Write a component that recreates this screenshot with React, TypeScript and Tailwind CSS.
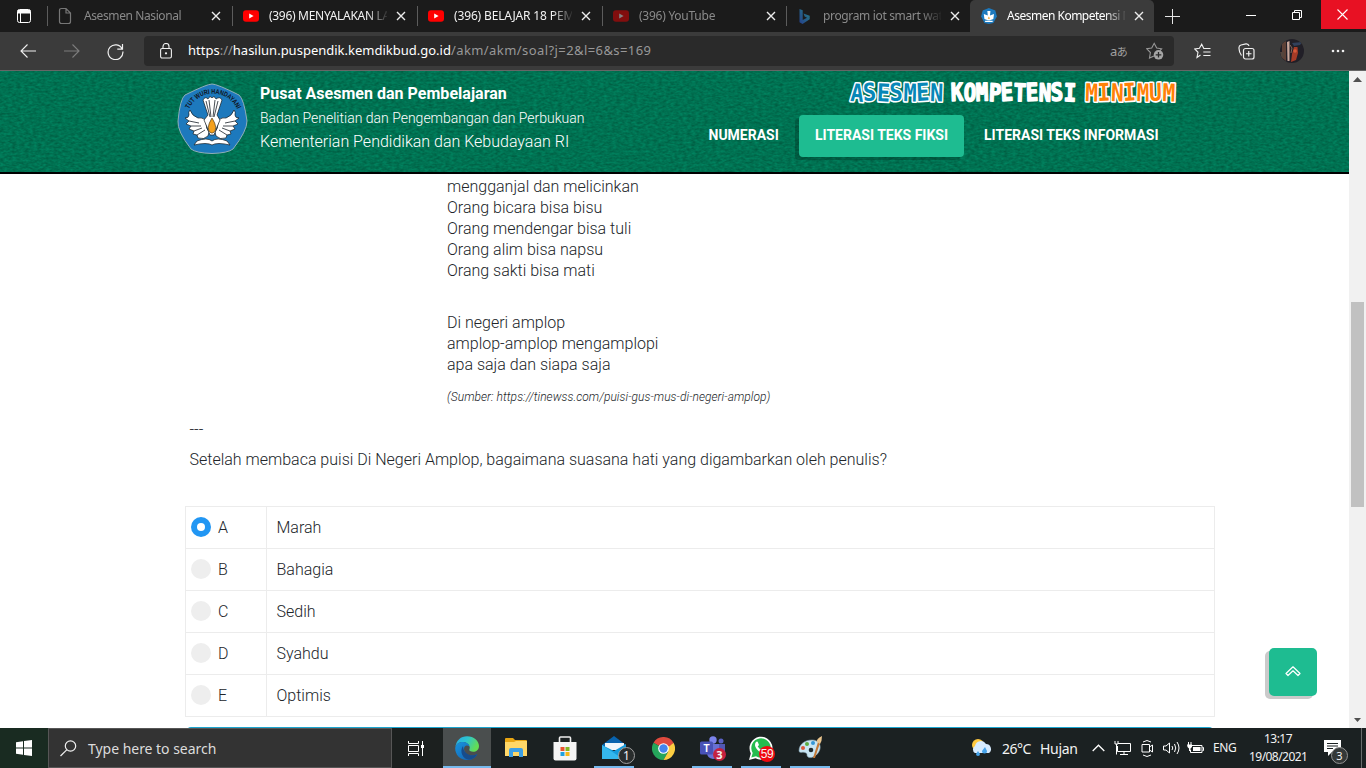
import React from 'react';

type P = { className?: string };

const CloseX = ({ className = '' }: P) => (
  <svg className={className} width="10" height="10" viewBox="0 0 10 10" fill="none" stroke="#ececec" strokeWidth="1.4">
    <path d="M1 1L9 9M9 1L1 9" />
  </svg>
);

const Page = () => (
  <svg width="16" height="18" viewBox="0 0 16 18" fill="none" stroke="#777" strokeWidth="1.2">
    <path d="M1.5 3.5Q1.5 1.5 3.5 1.5H8L12.500 6V14.500Q12.500 16.500 10.500 16.500H3.500Q1.500 16.500 1.500 14.500ZM8 1.500V6H12.500" />
  </svg>
);

const YouTube = ({ className = '' }: P) => (
  <svg className={className} width="16" height="16" viewBox="0 0 16 16">
    <rect x="0" y="2.300" width="16" height="11.400" rx="3" fill="#ff0000" />
    <path d="M6.200 5.500L10.600 8L6.200 10.500Z" fill="#fff" />
  </svg>
);

const Bing = () => (
  <svg width="16" height="17" viewBox="0 0 16 17">
    <defs>
      <linearGradient id="bing" x1="0" y1="1" x2="1" y2="0">
        <stop offset="0" stopColor="#25408c" />
        <stop offset="1" stopColor="#267f83" />
      </linearGradient>
    </defs>
    <path d="M2.500 1L5.700 2.300V12L10 9.700L7.600 8.400L6.500 5.500L12.700 7.800V11.200L5.500 16L2.500 14.200Z" fill="url(#bing)" />
  </svg>
);

const SealShapes = () => (
  <>
    <path d="M35 1Q40 1 62 12Q67 16 70 38Q70 48 56 66Q51 70 35 70.500Q19 70 14 66Q0 48 1 38Q3 16 8 12Q30 1 35 1Z" fill="#1d79bd" stroke="#90aeb8" strokeWidth="1" />
    <g fill="#fff" stroke="#151b20" strokeWidth=".7">
      <path d="M31 53Q27 57 21 55L20 52L16 51L17 48L12 46L14 43L9 41L12 38L8 35Q12 35 12 32Q11 29 13 27Q15 33 21 35Q28 34 29 40Q29 46 32 49Z" />
      <path d="M39 53Q43 57 49 55L50 52L54 51L53 48L58 46L56 43L61 41L58 38L62 35Q58 35 58 32Q59 29 57 27Q55 33 49 35Q42 34 41 40Q41 46 38 49Z" />
      <path d="M26 17Q28 13 31 16Q33 12 35 15Q37 12 39 16Q43 13 45 17L40 32L43 37L40 44L37 52H33L30 44L27 37L31 32Z" />
      <path d="M20 58Q30 54 35 58Q40 54 50 58L53 62Q40 59 35 62Q30 59 17 62Z" />
    </g>
    <path d="M29 18L33 34M32 17L34 34M38 17L36 34M41 18L37 34M17 48L25 45M20 52L28 47M53 48L45 45M50 52L42 47M12 38L22 40M58 38L48 40M14 43L24 43M56 43L46 43" fill="none" stroke="#182027" strokeWidth=".8" />
    <path d="M35 35Q42 46 36 50H34Q28 46 35 35Z" fill="#f4a01c" stroke="#352b18" strokeWidth=".6" />
  </>
);

const Seal = () => (
  <svg width="71" height="72" viewBox="0 0 71 72">
    <SealShapes />
    <defs>
      <path id="arc" d="M12 26A26.500 26.500 0 0 1 60 26" />
    </defs>
    <text fontFamily="Liberation Sans" fontWeight="700" fontSize="7" fill="#10151c">
      <textPath href="#arc" textLength="60" lengthAdjust="spacingAndGlyphs" startOffset="0">TUT WURI HANDAYANI</textPath>
    </text>
  </svg>
);

const MiniSeal = () => (
  <svg width="16" height="16" viewBox="0 0 71 72">
    <path d="M35 0L64 11L71 38L55 68L35 72L15 68L0 38L7 11Z" fill="#1d79bd" />
    <path d="M28 14H42L40 34L58 27L55 49L40 55H30L15 49L12 27L30 34Z M18 57H52V63H18Z" fill="#fff" />
    <path d="M35 38L40 48H30Z" fill="#f4a01c" />
  </svg>
);

type TabProps = {
  title: string;
  icon: React.ReactNode;
  width: string;
  tone: string;
  track: string;
  active?: boolean;
};

const Tab = ({ title, icon, width, tone, track, active }: TabProps) => (
  <div className={`${width} flex h-8 shrink-0 items-center ${active ? 'rounded-t-[5px] bg-[#3b3b3b]' : ''}`}>
    <span className={`h-5 w-px ${active ? '' : 'bg-[#5c5c5c]'}`} />
    <span className="flex w-9 shrink-0 justify-start pl-[10px]">{icon}</span>
    <span className={`w-[118px] shrink-0 overflow-hidden whitespace-nowrap text-[12px] leading-8 [mask-image:linear-gradient(to_right,#000_98px,transparent_120px)] ${tone} ${track}`}>
      {title}
    </span>
    <span className="ml-[9px]"><CloseX /></span>
  </div>
);

const TabStrip = () => (
  <div className="flex h-8 bg-[#1b1b1b]">
    <div className="flex w-[47px] shrink-0 items-center pl-[17px]">
      <svg width="14" height="14" viewBox="0 0 14 14" fill="none" stroke="#fff" strokeWidth="1">
        <rect x=".5" y=".5" width="13" height="13" rx="2" />
        <path d="M1 1.500H13V4H1ZM3.500 4V13" fill="#fff" />
      </svg>
    </div>
    <Tab width="w-[185px]" title="Asesmen Nasional" icon={<Page />} tone="text-[#8a8a8a]" track="tracking-[-0.4px]" />
    <Tab width="w-[185px]" title="(396) MENYALAKAN LAMPU" icon={<YouTube />} tone="text-[#f2f2f2]" track="tracking-[-0.3px]" />
    <Tab width="w-[185px]" title="(396) BELAJAR 18 PEMROGRAMAN" icon={<YouTube />} tone="text-[#f2f2f2]" track="tracking-[-0.15px]" />
    <Tab width="w-[184px]" title="(396) YouTube" icon={<YouTube className="opacity-45" />} tone="text-[#8a8a8a]" track="tracking-[-0.25px]" />
    <Tab width="w-[184px]" title="program iot smart water" icon={<Bing />} tone="text-[#8a8a8a]" track="tracking-[-0.35px]" />
    <Tab width="w-[184px]" title="Asesmen Kompetensi Minimum" icon={<MiniSeal />} tone="text-white" track="tracking-[-0.5px]" active />
    <div className="flex w-9 shrink-0 items-center justify-center">
      <svg width="15" height="15" viewBox="0 0 15 15" stroke="#e5e5e5"><path d="M7.500 0V15M0 7.500H15" /></svg>
    </div>
    <div className="ml-auto flex h-[29px] shrink-0">
      <span className="flex w-[46px] items-center justify-center pr-[2px]"><svg width="10" height="10" stroke="#fff"><path d="M0 5.500H10" /></svg></span>
      <span className="flex w-[46px] items-center justify-center pr-[2px]">
        <svg width="10" height="10" fill="none" stroke="#fff"><path d="M.5 2.500H7.500V9.500H.5ZM2.500 2.500V.5H9.500V7.500H7.500" /></svg>
      </span>
      <span className="flex w-[45px] items-center justify-center bg-[#e81123] pr-[2px]">
        <svg width="11" height="11" stroke="#fff" strokeWidth="1.1"><path d="M.5 .5L10.500 10.500M10.500 .5L.5 10.500" /></svg>
      </span>
    </div>
  </div>
);

const Toolbar = () => (
  <div className="flex h-[39px] items-start border-b border-[#666] bg-[#3b3b3b]">
    <div className="flex h-[38px] w-36 shrink-0 items-center pl-5">
      <svg width="16" height="14" fill="none" stroke="#f0f0f0" strokeWidth="1.1"><path d="M7.500 .5L1 7L7.500 13.500M1 7H16" /></svg>
      <svg className="ml-7" width="16" height="14" fill="none" stroke="#7d7d7d" strokeWidth="1.100"><path d="M8.500 .5L15 7L8.500 13.500M15 7H0" /></svg>
      <svg className="ml-[27px]" width="17" height="17" viewBox="0 0 17 17" fill="none" stroke="#f0f0f0" strokeWidth="1.200">
        <path d="M15.300 6.200A7.400 7.400 0 1 0 15.900 8.500M15.500 1V6.200H10.300" />
      </svg>
    </div>
    <div className="mt-1 flex h-[30px] w-[1030px] shrink-0 items-center rounded-[4px] bg-[#2a2a2a] pl-4">
      <svg width="12" height="16" viewBox="0 0 12 16" fill="none" stroke="#f0f0f0" strokeWidth="1.100">
        <rect x=".6" y="5.500" width="10.800" height="9.500" rx="1.500" />
        <path d="M3 5.500V3.500A3 3 0 0 1 9 3.500V5.500" /><circle cx="6" cy="10.300" r=".6" fill="#fff" />
      </svg>
      <span className="ml-4 whitespace-nowrap text-[13px] text-[#989898]">
        <span className="text-white">https</span>://<span className="text-white">hasilun.puspendik.kemdikbud.go.id</span><span className="tracking-[0.42px]">/akm/akm/soal?j=2&amp;l=6&amp;s=169</span>
      </span>
      <span className="ml-auto w-[18px] whitespace-nowrap font-['Noto_Sans',_'Noto_Sans_CJK_JP',sans-serif] text-[13px] leading-none tracking-[-0.5px] text-[#a0a0a0]">a<span className="text-[11px]">あ</span></span>
      <svg className="ml-[18px] mr-[10px]" width="18" height="18" viewBox="0 0 18 18" fill="none" stroke="#989898" strokeWidth="1.100">
        <path d="M8 14L3.500 16L4.400 10.500L.8 6.800L5.700 6L8.200 1.300L10.700 6L15.600 6.800L14 8.500" />
        <circle cx="12.500" cy="12.800" r="4.800" fill="#a5a5a5" stroke="none" /><path d="M12.500 10V15.600M9.700 12.800H15.300" stroke="#2a2a2a" strokeWidth="1.300" />
      </svg>
    </div>
    <div className="flex h-[38px] grow items-center pl-5">
      <svg width="17" height="16" viewBox="0 0 17 16" fill="none" stroke="#f0f0f0" strokeWidth="1.100">
        <path d="M6.500 12L3 14.500L4 9.300L.8 6L5.400 5.300L7.700 1.200L9.800 5.500H16.500M9.300 9H16.500M9.300 12.500H16.500" />
      </svg>
      <svg className="ml-[27px]" width="17" height="17" viewBox="0 0 17 17" fill="none" stroke="#f0f0f0" strokeWidth="1.200">
        <rect x="5.500" y="5.500" width="10.500" height="10.500" rx="2" /><path d="M10.750 8V13.500M8 10.750H13.500M3.500 12.500Q.7 8.500 1 4.500Q1 2.500 3 2L8 .8Q10.500 .6 11 3" />
      </svg>
      <svg className="ml-[25px]" width="24" height="24" viewBox="0 0 24 24">
        <defs><clipPath id="avatar"><circle cx="12" cy="12" r="12" /></clipPath></defs>
        <g clipPath="url(#avatar)">
          <rect width="24" height="24" fill="#211f27" /><path d="M2 4L6 2V22L2 19Z" fill="#5d4036" /><path d="M7 3L9.500 2V22H7.500Z" fill="#c9a79b" />
          <path d="M14 8L17.500 8L18 14L16 21L11 23L12 15Z" fill="#a63b27" /><path d="M12 4L22 3L20 6L14 7Z" fill="#31405c" /><path d="M0 13H4V18H1Z" fill="#54453d" />
          <circle cx="15" cy="12" r="1.800" fill="#d65a3a" /><path d="M10 6L12 9L11 14" stroke="#8a6659" fill="none" />
        </g>
      </svg>
      <svg className="ml-[27px]" width="14" height="4" fill="#f0f0f0"><circle cx="2" cy="2" r="1.300" /><circle cx="7" cy="2" r="1.300" /><circle cx="12" cy="2" r="1.300" /></svg>
    </div>
  </div>
);

const Texture = () => (
  <svg className="absolute inset-0" width="1349" height="101">
    <defs>
      <filter id="felt" x="0" y="0" width="100%" height="100%" colorInterpolationFilters="sRGB">
        <feTurbulence type="fractalNoise" baseFrequency=".24 .45" numOctaves="2" seed="8" />
        <feColorMatrix type="matrix" values="0 0 0 0 0  .22 0 0 0 .335  .17 0 0 0 .235  0 0 0 0 1" />
      </filter>
    </defs>
    <rect width="1349" height="101" fill="#00724f" />
    <rect width="1349" height="101" filter="url(#felt)" />
  </svg>
);

const Wordmark = () => (
  <svg className="block" width="330" height="24" viewBox="847 80 330 24" fontFamily="DejaVu Sans Mono" fontWeight="700" fontSize="24.500" strokeLinejoin="round">
    <g stroke="#fff" strokeWidth="3.200" style={{ paintOrder: 'stroke' }}>
      <text x="850" y="101" textLength="93" lengthAdjust="spacingAndGlyphs" fill="#0787b7" rotate="4 -3 3 -3 2 -3 2">ASESMEN</text>
      <text x="951" y="101" textLength="125" lengthAdjust="spacingAndGlyphs" fill="#fff" strokeWidth="1.500" rotate="-2 2 -2 3 -3 2 -2 2 -3 2">KOMPETENSI</text>
      <text x="1085" y="101" textLength="90" lengthAdjust="spacingAndGlyphs" fill="#ff8108" rotate="2 -2 2 -3 2 -2 2">MINIMUM</text>
    </g>
  </svg>
);

const SiteHeader = () => (
  <header className="relative h-[103px] overflow-hidden border-b-2 border-black bg-[#00724f] text-white">
    <Texture />
    <div className="relative flex h-[101px]">
      <div className="ml-[177px] mt-3 w-[83px] shrink-0"><Seal /></div>
      <div className="w-[433px] shrink-0 whitespace-nowrap pt-[11px]">
        <div className="text-[16px] font-bold leading-6 tracking-[0.02px]">Pusat Asesmen dan Pembelajaran</div>
        <div className="text-[14px] font-light leading-6">Badan Penelitian dan Pengembangan dan Perbukuan</div>
        <div className="text-[16px] font-light leading-6">Kementerian Pendidikan dan Kebudayaan RI</div>
      </div>
      <div className="w-[490px] shrink-0">
        <div className="ml-[154px] mt-[9px]"><Wordmark /></div>
        <nav className="mt-[11px] flex h-[42px] items-center whitespace-nowrap text-[14px] font-bold leading-10">
          <span className="h-[42px] w-[106px] pl-[15.5px]">NUMERASI</span>
          <span className="h-[42px] w-[165px] rounded-[4px] bg-[#1ebc91] text-center shadow-[-4px_3px_0_rgba(0,0,0,0.2)]">LITERASI TEKS FIKSI</span>
          <span className="h-[42px] pl-5">LITERASI TEKS INFORMASI</span>
        </nav>
      </div>
    </div>
  </header>
);

const stanza1 = ['mengganjal dan melicinkan', 'Orang bicara bisa bisu', 'Orang mendengar bisa tuli', 'Orang alim bisa napsu', 'Orang sakti bisa mati'];
const stanza2 = ['Di negeri amplop', 'amplop-amplop mengamplopi', 'apa saja dan siapa saja'];
const choices = [['A', 'Marah'], ['B', 'Bahagia'], ['C', 'Sedih'], ['D', 'Syahdu'], ['E', 'Optimis']];

const Question = () => (
  <main className="h-[554px] overflow-hidden pl-[185px] pt-[2px] text-[16px] font-light leading-[21px] text-[#212529]">
    <div className="pl-[262px]">
      {stanza1.map((l) => <p key={l}>{l}</p>)}
      <div className="h-[31px]" />
      {stanza2.map((l) => <p key={l}>{l}</p>)}
      <p className="mt-3 text-[12px] italic tracking-[0.05px]">(Sumber: https://tinewss.com/puisi-gus-mus-di-negeri-amplop)</p>
    </div>
    <p className="mt-[11px] pl-[4.5px]">---</p>
    <p className="mt-[9px] pl-[4.5px]">Setelah membaca puisi Di Negeri Amplop, bagaimana suasana hati yang digambarkan oleh penulis?</p>
    <div className="mt-9 w-[1030px] border border-b-0 border-[#ececec]">
      {choices.map(([k, t], i) => (
        <div key={k} className="flex h-[42px] items-center border-b border-[#ececec]">
          <div className="flex h-full w-[81px] items-center border-r border-[#ececec] pl-[5px]">
            {i === 0 ? (
              <span className="mb-px flex size-5 items-center justify-center rounded-full bg-[#2196f3]"><span className="size-2 rounded-full bg-white" /></span>
            ) : (
              <span className="mb-px size-5 rounded-full bg-[#eee]" />
            )}
            <span className="ml-[7px]">{k}</span>
          </div>
          <span className="pl-[9.5px]">{t}</span>
        </div>
      ))}
    </div>
    <div className="ml-[2px] mt-[10px] h-8 w-[1026px] rounded-[4px] bg-[#1ba5cf]" />
  </main>
);

const Scrollbar = () => (
  <div className="flex w-[17px] shrink-0 flex-col items-center bg-[#f1f1f1]">
    <svg className="mt-[6px]" width="9" height="5" fill="#505050"><path d="M4.500 0L9 5H0Z" /></svg>
    <div className="mt-[220px] h-[205px] w-[13px] bg-[#c1c1c1]" />
    <svg className="mb-[6px] mt-auto" width="7" height="4" fill="#505050"><path d="M0 0H7L3.500 4Z" /></svg>
  </div>
);

const Edge = () => (
  <svg width="24" height="24" viewBox="0 0 24 24">
    <defs>
      <linearGradient id="eg" x1="0" y1="0" x2="1" y2=".4"><stop offset="0" stopColor="#28a9e8" /><stop offset=".5" stopColor="#2dc5cf" /><stop offset="1" stopColor="#63dd54" /></linearGradient>
      <linearGradient id="eb" x1="0" y1="0" x2="1" y2="1"><stop offset="0" stopColor="#1794df" /><stop offset="1" stopColor="#155ca9" /></linearGradient>
    </defs>
    <path d="M.3 12C1 4 6 .2 12 .2C19 .2 24 5 24 10C24 15 19 17 15 15C13.500 14 15 13 14.700 11C14 8 11 6 8 6C4 6 1 8 .3 12Z" fill="url(#eg)" />
    <path d="M.2 12C1 8 4 6 8 6C11 6 14 7.500 14.700 10.500C12 8.500 9 9.500 9 13C9 17 13 20 18 19.500C20 19.300 22 17.500 22.300 18C20.500 22 16.500 24 12 24C5 24 0 18.500 .2 12Z" fill="url(#eb)" />
    <path d="M8 10C4 16 8 23 14 23.800C18 23.500 21 21 22.300 18C17 21 8.500 19 8 10Z" fill="#174c8b" />
  </svg>
);

const Folder = () => (
  <svg width="22" height="20" viewBox="0 0 22 20">
    <path d="M0 1Q0 0 1 0H8L10 2H21Q22 2 22 3V18H0Z" fill="#e8a512" /><path d="M0 4H9L11 3H22V18H0Z" fill="#ffd767" />
    <path d="M4 18V12Q4 10 6 10H16Q18 10 18 12V19H14V14H8V19H4Z" fill="#3c9fe5" />
  </svg>
);

const Store = () => (
  <svg width="24" height="25" viewBox="0 0 24 25">
    <path d="M6.500 7V2Q6.500 1 7.500 1H16.500Q17.500 1 17.500 2V7" fill="none" stroke="#eee" strokeWidth="1.600" /><path d="M.5 6H23.500V22.500Q23.500 24.500 21.500 24.500H2.500Q.5 24.500 .5 22.500Z" fill="#f4f4f4" />
    <path d="M7.500 11H11.500V15H7.500Z" fill="#e9532d" /><path d="M12.500 11H16.500V15H12.500Z" fill="#82b622" /><path d="M7.500 16H11.500V20H7.500Z" fill="#20a1df" /><path d="M12.500 16H16.500V20H12.500Z" fill="#f7b718" />
  </svg>
);

const Mail = () => (
  <svg width="24" height="24" viewBox="0 0 24 24">
    <path d="M0 9L12 0L24 9V12H0Z" fill="#0863ae" /><path d="M3 7H22V14H3Z" fill="#eff6fb" /><path d="M0 9L12 15L24 8V23H0Z" fill="#159bdc" /><path d="M0 9L21 23H0Z" fill="#35b7ed" />
  </svg>
);

const Chrome = () => (
  <svg width="23" height="23" viewBox="0 0 24 24">
    <path d="M12 12L1.600 6A12 12 0 0 1 22.400 6Z" fill="#e04a3e" /><path d="M12 12L1.600 6A12 12 0 0 0 12 24L17 15Z" fill="#25a65b" /><path d="M12 12L22.400 6A12 12 0 0 1 12 24L17 15Z" fill="#fdce42" />
    <path d="M12 6H22.400L18 10Z" fill="#e04a3e" /><circle cx="12" cy="12" r="5.600" fill="#fff" /><circle cx="12" cy="12" r="4.400" fill="#4585ed" />
  </svg>
);

const Teams = () => (
  <svg width="25" height="24" viewBox="0 0 25 24">
    <circle cx="13" cy="4" r="3.700" fill="#7b83eb" /><circle cx="21" cy="5" r="2.500" fill="#5b62c5" /><path d="M17 8H25V16Q23 21 17 19Z" fill="#5158b5" /><path d="M7 8H19V16Q18 23 13 23Q7 22 7 17Z" fill="#6870d4" />
    <rect y="5.500" width="13" height="13" rx="1.500" fill="#4852b7" />
    <text x="6.500" y="15.500" fontFamily="Liberation Sans" fontSize="10" fontWeight="700" fill="#fff" textAnchor="middle">T</text>
  </svg>
);

const WhatsApp = () => (
  <svg width="24" height="24" viewBox="0 0 24 24">
    <path d="M0 24L1.800 17.500A11.500 11.500 0 1 1 6.500 22.300Z" fill="#fff" /><path d="M2.300 21.500L3.700 17A9.700 9.700 0 1 1 7 20.300Z" fill="#25bd4f" />
    <path d="M7 6Q8.500 5 9 6.500L10 9L8.700 10.500Q10.500 13.500 13.500 14.500L15 13L18 14.500Q18 17 15.500 17.500C11 18 6 12 6 9Q6 7 7 6Z" fill="#fff" />
  </svg>
);

const Paint = () => (
  <svg width="25" height="24" viewBox="0 0 25 24">
    <path d="M1 15C1 8 7 4 14 4C20 4 23 8 22 13C20 20 13 23 10 21C8 19 10 18 8 17C5 15 2 18 1 15Z" fill="#c8e5f3" stroke="#819fae" strokeWidth=".6" />
    <circle cx="5" cy="12" r="2" fill="#db583c" /><circle cx="9" cy="8" r="2" fill="#5cac42" /><circle cx="15" cy="7" r="2" fill="#3596d6" /><circle cx="13" cy="14" r="2.300" fill="#1f292d" />
    <path d="M15 22L20 6L22 7L17 22Z" fill="#c47937" /><path d="M19 6Q18 3 24 0Q24 5 22 8Z" fill="#eac58e" />
  </svg>
);

const TaskApp = ({ children, running }: { children: React.ReactNode; running?: boolean }) => (
  <span className="relative flex h-full w-[49px] shrink-0 items-center justify-center pl-px">
    {children}
    {running && <span className="absolute bottom-0 left-[5px] h-[2px] w-10 bg-[#76b9ed]" />}
  </span>
);

const Taskbar = () => (
  <div className="flex h-10 bg-[#1b2122] text-[#f3f3f3]">
    <div className="flex w-12 shrink-0 items-center justify-center bg-[#192b21]">
      <svg width="16" height="16" viewBox="0 0 16 16" fill="#fff"><path d="M0 2.300L7 1.300V7.500H0ZM8 1.100L16 0V7.500H8ZM0 8.500H7V14.700L0 13.700ZM8 8.500H16V16L8 14.900Z" /></svg>
    </div>
    <div className="flex w-[344px] shrink-0 items-center border border-[#565656] bg-[#333] pl-[11px]">
      <svg width="17" height="17" viewBox="0 0 17 17" fill="none" stroke="#f0f0f0" strokeWidth="1.200"><circle cx="10.500" cy="6" r="5.200" /><path d="M6.700 9.800L.5 16" /></svg>
      <span className="ml-[11px] whitespace-nowrap text-[14px] tracking-[-0.030px] text-[#dcdcdc]">Type here to search</span>
    </div>
    <div className="flex w-[51px] shrink-0 items-center justify-center bg-[#1c201f] pr-[3px]">
      <svg width="16" height="15" viewBox="0 0 16 15" fill="none" stroke="#fff"><path d="M.5 0V2.500H10.500V0M.5 4.500H10.500V10.500H.5ZM.5 15V12.500H10.500V15M14.500 0V15" /><path d="M13 4H16V7H13Z" fill="#fff" stroke="none" /></svg>
    </div>
    <span className="relative flex w-12 shrink-0 items-center justify-center bg-[#4a4e4e]"><Edge /><span className="absolute bottom-0 left-0 h-[2px] w-12 bg-[#76b9ed]" /></span>
    <TaskApp><Folder /></TaskApp>
    <TaskApp><Store /></TaskApp>
    <TaskApp running><Mail /><span className="absolute left-[29px] top-[19px] flex size-[17px] items-center justify-center rounded-full border border-[#a0a0a0] bg-[#292d2d] text-[12px] leading-none">1</span></TaskApp>
    <TaskApp><Chrome /></TaskApp>
    <TaskApp running><Teams /><span className="absolute left-[26px] top-[20px] flex size-[13px] items-center justify-center rounded-full bg-[#c4213f] text-[11px] font-bold leading-none">3</span></TaskApp>
    <TaskApp running><WhatsApp /><span className="absolute left-[23px] top-[18px] flex size-4 items-center justify-center rounded-full bg-[#f00910] font-['Liberation_Sans',sans-serif] text-[12px] leading-none tracking-[-0.3px]">59</span></TaskApp>
    <TaskApp running><Paint /></TaskApp>
    <div className="ml-auto flex shrink-0 items-center whitespace-nowrap">
      <svg width="22" height="18" viewBox="0 0 22 18">
        <circle cx="7" cy="6" r="6" fill="#ffc940" /><path d="M4 14A4 4 0 0 1 4 7A6 6 0 0 1 15 5A5 5 0 0 1 18 14Z" fill="#d7ebff" /><path d="M7 12L5 15A2 2 0 1 0 9 15ZM14 8L11 12A2.500 2.500 0 1 0 16 12Z" fill="#45a3ea" />
      </svg>
      <span className="ml-[9px] w-[38px] text-[14px] tracking-[-0.5px]">26°C</span><span className="w-[52px] text-[14px] tracking-[-0.3px]">Hujan</span>
      <svg width="13" height="8" fill="none" stroke="#fff" strokeWidth="1.300"><path d="M.7 7L6.500 1.200L12.300 7" /></svg>
      <svg className="ml-[9px]" width="17" height="15" viewBox="0 0 17 15" fill="none" stroke="#fff"><path d="M4 2.500H16.500V10.500H3.500V5M10 10.500V13.500M6 13.500H14M1 0V3H4V0M2.500 3V13.500" /></svg>
      <svg className="ml-[10px]" width="12" height="17" viewBox="0 0 12 17" fill="none" stroke="#fff"><path d="M2 2Q6 -1 10 2M2 15Q6 18 10 15M1 4.500H8.500V12H1Z" /><path d="M8.500 7L11.500 5V12L8.500 10" /></svg>
      <svg className="ml-[10px]" width="17" height="14" viewBox="0 0 17 14" fill="none" stroke="#fff"><path d="M.5 5H3L6.500 2V12L3 9H.5ZM9 5Q10.500 7 9 9M11.500 3Q14 7 11.500 11M14 1Q18 7 14 13" /></svg>
      <svg className="ml-[7px]" width="17" height="13" viewBox="0 0 17 13" fill="none" stroke="#fff"><path d="M5 3.500H15V10.500H3.500V8M15.500 5.500H16.500V8.500H15.500" /><path d="M6 5H13.500V9H6ZM0 2.500H5V5L3.500 6.500H2L.5 5ZM1 0H2V3H1ZM3.500 0H4.500V3H3.500ZM2 6H3.500V9H2Z" fill="#fff" stroke="none" /></svg>
      <span className="ml-[9px] w-[23px] text-[12px] tracking-[-0.4px]">ENG</span>
      <span className="ml-[13px] w-[58px] text-center text-[12px] leading-[18px] tracking-[-0.55px]">13:17<br />19/08/2021</span>
      <span className="relative ml-[17px] flex h-10 w-[42px] items-center">
        <svg width="18" height="18" viewBox="0 0 18 18"><path d="M0 1H17V13H8L4 17V13H0Z" fill="#fff" /><path d="M3 4.500H14M3 7H14M3 9.500H9" stroke="#1b2122" /></svg>
        <span className="absolute left-[7px] top-[19px] flex size-[17px] items-center justify-center rounded-full border border-[#929292] bg-[#343838] text-[11px] leading-none">3</span>
        <span className="absolute right-1 top-0 h-10 w-px bg-[#686c6c]" />
      </span>
    </div>
  </div>
);

export default function App() {
  return (
    <div className="relative flex h-[768px] w-[1366px] flex-col overflow-hidden bg-white font-['Noto_Sans',sans-serif]">
      <TabStrip />
      <Toolbar />
      <div className="flex h-[657px]">
        <div className="w-[1349px] shrink-0 font-['Roboto',sans-serif]">
          <SiteHeader />
          <Question />
        </div>
        <Scrollbar />
      </div>
      <Taskbar />
      <button className="absolute left-[1269px] top-[648px] flex size-12 items-center justify-center rounded-[5px] bg-[#1ebc91] shadow-[-4px_3px_0_#cacaca]">
        <svg className="mb-px" width="16" height="11" viewBox="0 0 16 11" fill="none" stroke="#fff" strokeWidth="1.200"><path d="M1 7.500L8 .8L15 7.500L13 9.500L8 4.800L3 9.500Z" strokeLinejoin="round" /></svg>
      </button>
    </div>
  );
}
